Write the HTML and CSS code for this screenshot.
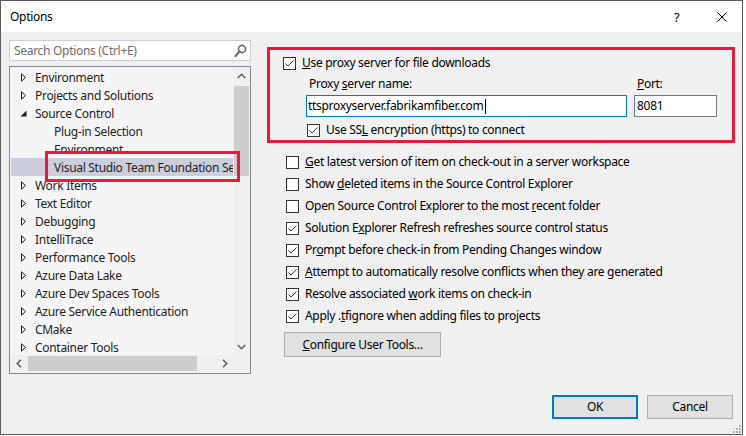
FILE: index.html
```html
<!DOCTYPE html>
<html>
<head>
<meta charset="utf-8">
<title>Options</title>
<link rel="stylesheet" href="styles.css">
</head>
<body>
<div class="window">
  <div class="titlebar">
    <span class="title">Options</span>
    <span class="help">?</span>
    <svg class="close" width="10" height="10" viewBox="0 0 10 10"><path d="M0.5 0.5 L9.5 9.5 M9.5 0.5 L0.5 9.5" stroke="#000" stroke-width="1" fill="none"/></svg>
  </div>

  <div class="content">
    <div class="left">
      <div class="search">
        <span class="ph">Search Options (Ctrl+E)</span>
        <svg class="mag" width="13" height="14" viewBox="0 0 13 14"><circle cx="8" cy="5" r="3.6" stroke="#6a6a6a" stroke-width="1.6" fill="none"/><path d="M5.6 7.6 L1.5 12" stroke="#6a6a6a" stroke-width="2.2" stroke-linecap="round"/></svg>
      </div>

      <div class="tree">
        <div class="tree-main">
          <div class="rows">
            <div class="row"><svg class="tw" width="7" height="9" viewBox="0 0 7 9"><path d="M1.5 0.8 L5.5 4.5 L1.5 8.2 Z" stroke="#1e1e1e" stroke-width="1" fill="none"/></svg><span>Environment</span></div>
            <div class="row"><svg class="tw" width="7" height="9" viewBox="0 0 7 9"><path d="M1.5 0.8 L5.5 4.5 L1.5 8.2 Z" stroke="#1e1e1e" stroke-width="1" fill="none"/></svg><span>Projects and Solutions</span></div>
            <div class="row"><svg class="tw" width="7" height="9" viewBox="0 0 7 9"><path d="M6.5 1.5 L6.5 7.5 L0.5 7.5 Z" fill="#1e1e1e"/></svg><span>Source Control</span></div>
            <div class="row child"><span>Plug-in Selection</span></div>
            <div class="row child"><span>Environment</span></div>
            <div class="row child sel"><span>Visual Studio Team Foundation Server</span></div>
            <div class="row"><svg class="tw" width="7" height="9" viewBox="0 0 7 9"><path d="M1.5 0.8 L5.5 4.5 L1.5 8.2 Z" stroke="#1e1e1e" stroke-width="1" fill="none"/></svg><span>Work Items</span></div>
            <div class="row"><svg class="tw" width="7" height="9" viewBox="0 0 7 9"><path d="M1.5 0.8 L5.5 4.5 L1.5 8.2 Z" stroke="#1e1e1e" stroke-width="1" fill="none"/></svg><span>Text Editor</span></div>
            <div class="row"><svg class="tw" width="7" height="9" viewBox="0 0 7 9"><path d="M1.5 0.8 L5.5 4.5 L1.5 8.2 Z" stroke="#1e1e1e" stroke-width="1" fill="none"/></svg><span>Debugging</span></div>
            <div class="row"><svg class="tw" width="7" height="9" viewBox="0 0 7 9"><path d="M1.5 0.8 L5.5 4.5 L1.5 8.2 Z" stroke="#1e1e1e" stroke-width="1" fill="none"/></svg><span>IntelliTrace</span></div>
            <div class="row"><svg class="tw" width="7" height="9" viewBox="0 0 7 9"><path d="M1.5 0.8 L5.5 4.5 L1.5 8.2 Z" stroke="#1e1e1e" stroke-width="1" fill="none"/></svg><span>Performance Tools</span></div>
            <div class="row"><svg class="tw" width="7" height="9" viewBox="0 0 7 9"><path d="M1.5 0.8 L5.5 4.5 L1.5 8.2 Z" stroke="#1e1e1e" stroke-width="1" fill="none"/></svg><span>Azure Data Lake</span></div>
            <div class="row"><svg class="tw" width="7" height="9" viewBox="0 0 7 9"><path d="M1.5 0.8 L5.5 4.5 L1.5 8.2 Z" stroke="#1e1e1e" stroke-width="1" fill="none"/></svg><span>Azure Dev Spaces Tools</span></div>
            <div class="row"><svg class="tw" width="7" height="9" viewBox="0 0 7 9"><path d="M1.5 0.8 L5.5 4.5 L1.5 8.2 Z" stroke="#1e1e1e" stroke-width="1" fill="none"/></svg><span>Azure Service Authentication</span></div>
            <div class="row"><svg class="tw" width="7" height="9" viewBox="0 0 7 9"><path d="M1.5 0.8 L5.5 4.5 L1.5 8.2 Z" stroke="#1e1e1e" stroke-width="1" fill="none"/></svg><span>CMake</span></div>
            <div class="row"><svg class="tw" width="7" height="9" viewBox="0 0 7 9"><path d="M1.5 0.8 L5.5 4.5 L1.5 8.2 Z" stroke="#1e1e1e" stroke-width="1" fill="none"/></svg><span>Container Tools</span></div>
          </div>
          <div class="vscroll">
            <div class="sbtn"><svg width="9" height="6" viewBox="0 0 9 6"><path d="M0.8 5 L4.5 1.3 L8.2 5" stroke="#606060" stroke-width="1.6" fill="none"/></svg></div>
            <div class="vthumb"></div>
            <div class="vspace"></div>
            <div class="sbtn"><svg width="9" height="6" viewBox="0 0 9 6"><path d="M0.8 1 L4.5 4.7 L8.2 1" stroke="#606060" stroke-width="1.6" fill="none"/></svg></div>
          </div>
        </div>
        <div class="hscroll">
          <div class="hbtn"><svg width="6" height="9" viewBox="0 0 6 9"><path d="M5 0.8 L1.3 4.5 L5 8.2" stroke="#606060" stroke-width="1.6" fill="none"/></svg></div>
          <div class="hthumb"></div>
          <div class="hspace"></div>
          <div class="hbtn"><svg width="6" height="9" viewBox="0 0 6 9"><path d="M1 0.8 L4.7 4.5 L1 8.2" stroke="#606060" stroke-width="1.6" fill="none"/></svg></div>
          <div class="corner"></div>
        </div>
        <div class="mark-sel"></div>
      </div>
    </div>

    <div class="right">
      <div class="proxy">
        <label class="cbrow top">
          <span class="cb"><svg width="11" height="11" viewBox="0 0 11 11"><path d="M1.5 5.5 L4 8 L9.5 2.5" stroke="#333" stroke-width="1" fill="none"/></svg></span>
          <span><u>U</u>se proxy server for file downloads</span>
        </label>
        <div class="fields">
          <div class="field name">
            <span class="flabel">Proxy <u>s</u>erver name:</span>
            <div class="input focus"><span>ttsproxyserver.fabrikamfiber.com</span><span class="caret"></span></div>
          </div>
          <div class="field port">
            <span class="flabel"><u>P</u>ort:</span>
            <div class="input"><span>8081</span></div>
          </div>
        </div>
        <label class="cbrow ssl">
          <span class="cb"><svg width="11" height="11" viewBox="0 0 11 11"><path d="M1.5 5.5 L4 8 L9.5 2.5" stroke="#333" stroke-width="1" fill="none"/></svg></span>
          <span>Use SS<u>L</u> encryption (https) to connect</span>
        </label>
      </div>

      <div class="checks">
        <label class="cbrow"><span class="cb"></span><span><u>G</u>et latest version of item on check-out in a server workspace</span></label>
        <label class="cbrow"><span class="cb"></span><span>Show <u>d</u>eleted items in the Source Control Explorer</span></label>
        <label class="cbrow"><span class="cb"></span><span>Open Source Control Explorer to the most <u>r</u>ecent folder</span></label>
        <label class="cbrow"><span class="cb"><svg width="11" height="11" viewBox="0 0 11 11"><path d="M1.5 5.5 L4 8 L9.5 2.5" stroke="#333" stroke-width="1" fill="none"/></svg></span><span>Solution E<u>x</u>plorer Refresh refreshes source control status</span></label>
        <label class="cbrow"><span class="cb"><svg width="11" height="11" viewBox="0 0 11 11"><path d="M1.5 5.5 L4 8 L9.5 2.5" stroke="#333" stroke-width="1" fill="none"/></svg></span><span>Pr<u>o</u>mpt before check-in from Pending Changes window</span></label>
        <label class="cbrow"><span class="cb"><svg width="11" height="11" viewBox="0 0 11 11"><path d="M1.5 5.5 L4 8 L9.5 2.5" stroke="#333" stroke-width="1" fill="none"/></svg></span><span><u>A</u>ttempt to automatically resolve conflicts when they are generated</span></label>
        <label class="cbrow"><span class="cb"><svg width="11" height="11" viewBox="0 0 11 11"><path d="M1.5 5.5 L4 8 L9.5 2.5" stroke="#333" stroke-width="1" fill="none"/></svg></span><span>Resolve associated <u>w</u>ork items on check-in</span></label>
        <label class="cbrow"><span class="cb"><svg width="11" height="11" viewBox="0 0 11 11"><path d="M1.5 5.5 L4 8 L9.5 2.5" stroke="#333" stroke-width="1" fill="none"/></svg></span><span>Apply .<u>t</u>fignore when adding files to projects</span></label>
      </div>

      <div class="btn tools"><u>C</u>onfigure User Tools...</div>
    </div>
  </div>

  <div class="footer">
    <div class="btn ok">OK</div>
    <div class="btn">Cancel</div>
  </div>

  <svg class="grip" width="8" height="8" viewBox="0 0 8 8" fill="#b0b0b0">
    <rect x="6" y="0" width="2" height="2"/>
    <rect x="3" y="3" width="2" height="2"/><rect x="6" y="3" width="2" height="2"/>
    <rect x="0" y="6" width="2" height="2"/><rect x="3" y="6" width="2" height="2"/><rect x="6" y="6" width="2" height="2"/>
  </svg>
</div>
</body>
</html>
```

FILE: styles.css
```css
* { box-sizing: border-box; }

html, body {
  margin: 0;
  padding: 0;
  background: #ffffff;
}

body {
  font-family: "Noto Sans", "Open Sans", sans-serif;
  font-size: 12px;
  letter-spacing: -0.3px;
  color: #000;
}

u { text-decoration: underline; text-underline-offset: 1px; }

.window {
  position: relative;
  width: 743px;
  height: 435px;
  border: 1px solid #5a5a5a;
  background: #f0f0f0;
  display: flex;
  flex-direction: column;
}

/* title bar */
.titlebar {
  height: 31px;
  background: #fff;
  display: flex;
  align-items: center;
  padding: 0 15px 0 9px;
  flex: none;
}
.title { flex: 1; font-size: 12px; line-height: 16px; }
.help { font-size: 13px; width: 6px; margin-right: 37px; line-height: 16px; }
.close { display: block; }

/* content */
.content {
  display: flex;
  padding: 8px 0 0 8px;
  flex: none;
}

.left { width: 242px; flex: none; }

.search {
  height: 21px;
  border: 1px solid #cdcdd6;
  background: #fff;
  display: flex;
  align-items: center;
  padding: 0 3px 0 4px;
}
.ph { flex: 1; color: #6d6d6d; line-height: 16px; }
.mag { display: block; }

.tree {
  position: relative;
  margin-top: 5px;
  height: 308px;
  border: 1px solid #828790;
  background: #f5f5f5;
  display: flex;
  flex-direction: column;
}
.tree-main { display: flex; height: 288px; flex: none; }
.rows {
  flex: 1;
  min-width: 0;
  overflow: hidden;
  padding-top: 1px;
  color: #1e1e1e;
}
.row {
  height: 18px;
  display: flex;
  align-items: center;
  white-space: nowrap;
  padding-left: 10px;
  padding-top: 1px;
  line-height: 16px;
}
.row .tw { display: block; margin-right: 8px; flex: none; }
.row.child { padding-left: 44px; }
.row.sel { background: #cccedb; margin-left: 1px; padding-left: 43px; }

.vscroll {
  width: 17px;
  flex: none;
  background: #f0f0f0;
  display: flex;
  flex-direction: column;
}
.sbtn {
  height: 17px;
  display: flex;
  align-items: center;
  justify-content: center;
  flex: none;
}
.sbtn svg, .hbtn svg { display: block; }
.vthumb { height: 90px; margin: 2px 1px 0 1px; background: #cdcdcd; flex: none; }
.vspace { flex: 1; }

.hscroll {
  height: 17px;
  flex: none;
  display: flex;
  background: #f0f0f0;
}
.hbtn {
  width: 17px;
  display: flex;
  align-items: center;
  justify-content: center;
  flex: none;
}
.hthumb { width: 169px; margin: 1px 0 1px 1px; background: #cdcdcd; flex: none; }
.hspace { flex: 1; }
.corner { width: 17px; flex: none; background: #f0f0f0; }

.mark-sel {
  position: absolute;
  left: 35px;
  top: 84px;
  width: 195px;
  height: 31px;
  border: 3px solid #e8193c;
}

/* right side */
.right {
  margin-left: 16px;
  padding-top: 7px;
  flex: none;
  width: 468px;
}

.proxy {
  width: 468px;
  height: 96px;
  border: 3px solid #e8193c;
  padding-top: 4px;
}

.cbrow {
  display: flex;
  align-items: center;
  height: 22px;
  white-space: nowrap;
  line-height: 16px;
}
.cb {
  width: 13px;
  height: 13px;
  border: 1px solid #333;
  background: #fff;
  margin-right: 6px;
  flex: none;
  display: block;
}
.cb svg { display: block; }

.cbrow.top { height: 18px; padding-left: 13px; }

.fields {
  display: flex;
  padding-left: 36px;
  margin-top: 4px;
  gap: 7px;
}
.field { display: flex; flex-direction: column; }
.flabel { padding-left: 3px; height: 16px; line-height: 16px; margin-bottom: 3px; }
.input {
  height: 22px;
  border: 1px solid #7a7a7a;
  background: #fff;
  display: flex;
  align-items: center;
  padding-left: 1px;
  line-height: 16px;
}
.input.focus { border-color: #0078d7; }
.name .input { width: 321px; }
.port .input { width: 83px; padding-left: 2px; }
.caret { width: 1px; height: 15px; background: #000; margin-left: 1px; }

.cbrow.ssl { height: 18px; margin-top: 4px; padding-left: 37px; }

.checks { margin-top: 8px; padding-left: 19px; }

.btn {
  height: 24px;
  width: 86px;
  border: 1px solid #adadad;
  background: #e1e1e1;
  display: flex;
  align-items: center;
  justify-content: center;
  line-height: 16px;
}
.btn.tools { width: 157px; height: 25px; margin: 5px 0 0 17px; }

.footer {
  margin-top: auto;
  display: flex;
  justify-content: flex-end;
  gap: 9px;
  padding: 0 9px 15px 0;
}
.btn.ok { border: 2px solid #0078d7; }

.grip {
  position: absolute;
  right: 1px;
  bottom: 1px;
}
```
